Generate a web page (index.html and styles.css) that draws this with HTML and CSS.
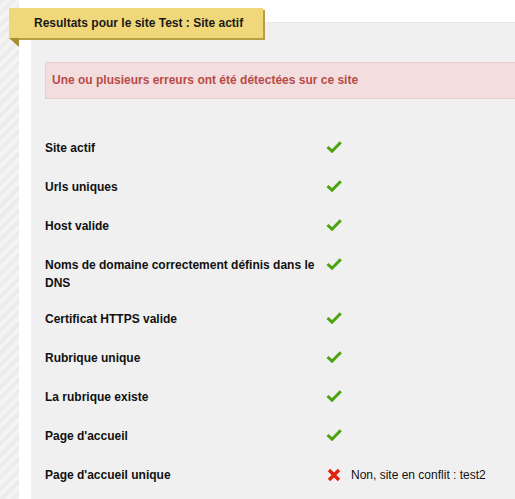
FILE: index.html
```html
<!DOCTYPE html>
<html lang="fr">
<head>
    <meta charset="UTF-8">
    <title>Resultats</title>
    <link rel="stylesheet" href="styles.css">
</head>
<body>
    <div class="layout">
        <div class="side"></div>
        <main class="content">
            <h2 class="ribbon">Resultats pour le site Test : Site actif</h2>
            <div class="panel">
                <div class="alert">Une ou plusieurs erreurs ont été détectées sur ce site</div>

                <div class="checks">
                    <div class="row"><div class="label">Site actif</div><div class="state"><svg class="ok" width="16" height="12" viewBox="0 0 16 12"><path d="M1.5 6 L6 10.2 L14.8 1.2"/></svg></div></div>
                    <div class="row"><div class="label">Urls uniques</div><div class="state"><svg class="ok" width="16" height="12" viewBox="0 0 16 12"><path d="M1.5 6 L6 10.2 L14.8 1.2"/></svg></div></div>
                    <div class="row"><div class="label">Host valide</div><div class="state"><svg class="ok" width="16" height="12" viewBox="0 0 16 12"><path d="M1.5 6 L6 10.2 L14.8 1.2"/></svg></div></div>
                    <div class="row"><div class="label">Noms de domaine correctement définis dans le DNS</div><div class="state"><svg class="ok" width="16" height="12" viewBox="0 0 16 12"><path d="M1.5 6 L6 10.2 L14.8 1.2"/></svg></div></div>
                    <div class="row"><div class="label">Certificat HTTPS valide</div><div class="state"><svg class="ok" width="16" height="12" viewBox="0 0 16 12"><path d="M1.5 6 L6 10.2 L14.8 1.2"/></svg></div></div>
                    <div class="row"><div class="label">Rubrique unique</div><div class="state"><svg class="ok" width="16" height="12" viewBox="0 0 16 12"><path d="M1.5 6 L6 10.2 L14.8 1.2"/></svg></div></div>
                    <div class="row"><div class="label">La rubrique existe</div><div class="state"><svg class="ok" width="16" height="12" viewBox="0 0 16 12"><path d="M1.5 6 L6 10.2 L14.8 1.2"/></svg></div></div>
                    <div class="row"><div class="label">Page d'accueil</div><div class="state"><svg class="ok" width="16" height="12" viewBox="0 0 16 12"><path d="M1.5 6 L6 10.2 L14.8 1.2"/></svg></div></div>
                    <div class="row"><div class="label">Page d'accueil unique</div><div class="state"><svg class="ko" width="14" height="14" viewBox="0 0 14 14"><path d="M2 2 L12 12 M12 2 L2 12"/></svg><span class="msg">Non, site en conflit : test2</span></div></div>
                </div>
            </div>
        </main>
    </div>
</body>
</html>
```

FILE: styles.css
```css
body { margin: 0; background: #fff; font-family: "Liberation Sans", Arial, sans-serif; font-size: 12px; color: #111; }
.layout { display: flex; min-height: 499px; }
.side { width: 19px; flex: none; background: repeating-linear-gradient(135deg, #ececec 0, #ececec 4px, #f4f4f4 4px, #f4f4f4 8px); }
.content { flex: 1; position: relative; padding: 22px 0 0 12px; }
.ribbon { position: absolute; left: -10px; top: 8px; width: 229px; height: 30px; margin: 0; padding: 0 0 0 25px; line-height: 30px; font-size: 12px; font-weight: bold; color: #1a1a1a; background: #f0d87a; box-shadow: 2px 2px 0 #b8a040; z-index: 2; }
.ribbon::before { content: ""; position: absolute; left: 0; top: 100%; border-top: 9px solid #a88f2e; border-left: 10px solid transparent; }
.panel { background: #f0f0f0; border-top: 1px solid #e8e8e8; min-height: 470px; padding: 39px 0 0 14px; }
.alert { background: #f2dede; border: 1px solid #ebccd1; border-right: none; color: #b94a48; font-weight: bold; padding: 0 6px; height: 35px; line-height: 35px; }
.checks { margin-top: 30px; }
.row { display: flex; padding: 10px 0 8px; line-height: 18px; }
.label { width: 281px; flex: none; font-weight: bold; }
.state { display: flex; align-items: flex-start; min-height: 21px; }
.ok { margin-top: 2px; fill: none; stroke: #4ba30e; stroke-width: 3; }
.ko { margin: 2px 0 0 1px; fill: none; stroke: #e2230c; stroke-width: 3.4; }
.msg { margin-left: 10px; }
```
